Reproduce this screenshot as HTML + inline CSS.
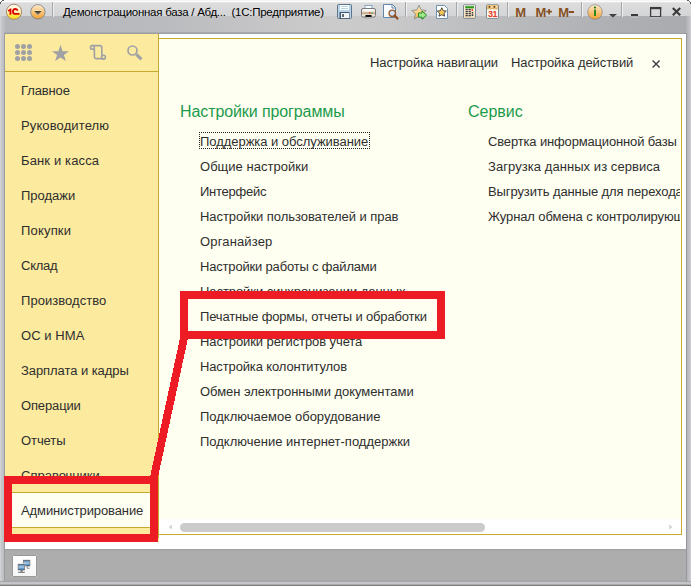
<!DOCTYPE html>
<html><head><meta charset="utf-8">
<style>
*{margin:0;padding:0;box-sizing:border-box}
html,body{width:691px;height:586px;overflow:hidden;background:#b0b2b6}
body{position:relative;font-family:"Liberation Sans",sans-serif;}
.a{position:absolute}
.t{position:absolute;white-space:nowrap;line-height:13px;font-size:13px;color:#2e2e2e;transform:scaleY(1.04);transform-origin:0 11px}
#tb-up{left:0;top:0;width:691px;height:16px;background:linear-gradient(#f2f2f3 0px,#fbfbfb 1.5px,#e6e6e7 2.5px,#dcdcdd 3.5px,#d4d5d7 16px)}
#tb-lo{left:0;top:16px;width:691px;height:18px;background:linear-gradient(90deg,#b3b5b8 0px,#b8b9bc 100px,#babbbe 160px,#c8c8c9 290px,#cbcbcb 340px,#c9c9ca 390px,#c0c1c3 450px,#aeafb2 620px,#a9abae 691px)}
#tb-sh{left:4px;top:32px;width:683px;height:2px;background:linear-gradient(#b0b1b4,#96979a)}
#lframe{left:0;top:16px;width:5px;height:570px;background:linear-gradient(90deg,#d8d9db 0px,#c9cacd 1px,#bfc1c4 3px,#b9bbbe 5px);border-top-right-radius:0}
#ldark{left:4px;top:33px;width:1px;height:549px;background:#9a9c9f}
#rdark{left:686px;top:33px;width:1px;height:549px;background:#96989b}
#rframe{left:686px;top:16px;width:5px;height:570px;background:linear-gradient(90deg,#aeb0b3 0px,#b9babd 2px,#c4c5c8 4px,#d0d1d3 5px);border-top-left-radius:3px}
#bframe{left:0;top:581px;width:691px;height:5px;background:linear-gradient(#8e9093 0px,#c0c1c4 1px,#c8c9cb 3px,#8a8b8e 4px,#6f7073 5px)}
#side{left:5px;top:34px;width:154px;height:508px;background:#fcea9e}
#sideline{left:5px;top:71px;width:153px;height:1px;background:#c7a92c}
#sidev{left:158px;top:34px;width:1px;height:504px;background:#c7a92c}
#white{left:159px;top:34px;width:527px;height:515px;background:#fff}
#main{left:159px;top:39px;width:522px;height:480px;background:#fffff1}
#mtop{left:159px;top:38px;width:523px;height:1px;background:#c7a92c}
#mright{left:681px;top:38px;width:1px;height:497px;background:#c7a92c}
#mbot{left:159px;top:534px;width:523px;height:1px;background:#c7a92c}
#swhite{left:5px;top:542px;width:154px;height:7px;background:#fff}
#status{left:5px;top:549px;width:681px;height:32px;background:linear-gradient(#9a9a9b 0px,#a8a8a8 1px,#adadad 3px,#adadad 31px,#a0a0a1 32px)}
#sel{left:5px;top:492px;width:153px;height:36px;background:#fffff1;border-top:1px solid #c7a92c;border-bottom:1px solid #c7a92c}
.side{left:21px}
.item{left:200px}
.grp{font-size:16px;line-height:16px;color:#1c9a4c;transform:none}
.red{position:absolute;background:#ed1c24}
.sep{position:absolute;top:2px;width:2px;height:15px;background:linear-gradient(90deg,#a6a7a9 0,#a6a7a9 1px,#ececec 1px)}
</style></head><body>
<div class="a" id="tb-up"></div>
<div class="a" id="tb-lo"></div>
<div class="a" id="tb-sh"></div>
<div class="a" id="lframe"></div>
<div class="a" id="rframe"></div>
<div class="a" id="bframe"></div><div class="a" id="ldark"></div><div class="a" id="rdark"></div>
<div class="a" id="white"></div>
<div class="a" id="side"></div>
<div class="a" id="swhite"></div>
<div class="a" id="sideline"></div>
<div class="a" id="sidev"></div>
<div class="a" id="main"></div>
<div class="a" id="mtop"></div>
<div class="a" id="mright"></div>
<div class="a" id="mbot"></div>
<div class="a" id="status"></div>
<div class="a" id="sel"></div>

<!-- title bar icons -->
<svg class="a" style="left:0;top:0" width="691" height="34">
  <defs>
    <linearGradient id="g1c" x1="0" y1="0" x2="0" y2="1"><stop offset="0" stop-color="#fffdf2"/><stop offset="0.5" stop-color="#fff4c0"/><stop offset="0.68" stop-color="#ffec50"/><stop offset="1" stop-color="#f8de10"/></linearGradient>
    <linearGradient id="gor" x1="0" y1="0" x2="0" y2="1"><stop offset="0" stop-color="#fdeccc"/><stop offset="0.5" stop-color="#f9c47c"/><stop offset="1" stop-color="#f3a030"/></linearGradient>
    <linearGradient id="gtri" x1="0" y1="0" x2="0" y2="1"><stop offset="0" stop-color="#3c3424"/><stop offset="1" stop-color="#9a8a6a"/></linearGradient>
    <linearGradient id="gstar" x1="0" y1="0" x2="0" y2="1"><stop offset="0" stop-color="#fff0c0"/><stop offset="1" stop-color="#f8b048"/></linearGradient>
    <linearGradient id="gbeige" x1="0" y1="0" x2="0" y2="1"><stop offset="0" stop-color="#fff6e8"/><stop offset="1" stop-color="#f6dcb4"/></linearGradient>
    <linearGradient id="gprn" x1="0" y1="0" x2="0" y2="1"><stop offset="0" stop-color="#faf6f2"/><stop offset="0.4" stop-color="#eadfd2"/><stop offset="0.55" stop-color="#b8987a"/><stop offset="0.7" stop-color="#e8dccd"/><stop offset="1" stop-color="#f4eee8"/></linearGradient>
  </defs>
  <!-- top-left corner -->
  <g shape-rendering="crispEdges"><rect x="0" y="0" width="2" height="1" fill="#fff"/><rect x="0" y="1" width="1" height="1" fill="#fff"/><rect x="2" y="0" width="2" height="1" fill="#5a5a5a"/><rect x="1" y="1" width="1" height="1" fill="#6a6a6a"/><rect x="0" y="2" width="1" height="2" fill="#5a5a5a"/></g>
  <g shape-rendering="crispEdges"><rect x="689" y="0" width="2" height="1" fill="#fff"/><rect x="690" y="1" width="1" height="1" fill="#fff"/><rect x="687" y="0" width="2" height="1" fill="#5a5a5a"/><rect x="689" y="1" width="1" height="1" fill="#6a6a6a"/><rect x="690" y="2" width="1" height="2" fill="#5a5a5a"/></g>
  <!-- 1C logo -->
  <circle cx="14" cy="11.8" r="7.6" fill="url(#g1c)" stroke="#a88470" stroke-width="1"/>
  <path d="M7.8 10.2 L10.3 8.6 L11.4 8.6 L11.4 14.7 L9.5 14.7 L9.5 11.1 L8.3 11.7 Z" fill="#e00000"/>
  <path d="M17.5 10.6 C17.3 8.7 13.8 8.3 13.1 10.6 C12.7 12.4 13.2 13.9 14.8 13.9 L19.4 13.9" fill="none" stroke="#e00000" stroke-width="1.9"/>
  <!-- dropdown circle -->
  <circle cx="37.9" cy="11.8" r="7.2" fill="url(#gor)" stroke="#6d7382" stroke-width="0.9" stroke-opacity="0.8"/>
  <path d="M33.6 10.6 L42.2 10.6 L37.9 15.6 Z" fill="#fff6e0" opacity="0.9"/>
  <path d="M34.2 11 L41.6 11 L37.9 15.2 Z" fill="url(#gtri)"/>
  <!-- separators -->
  <rect x="52" y="2" width="1" height="15" fill="#a6a7a9"/><rect x="53" y="2" width="1" height="15" fill="#eeeeee"/>
  <!-- floppy -->
  <rect x="337.5" y="4.5" width="14" height="14" rx="1" fill="#b9d3ea" stroke="#5e7386"/>
  <rect x="340" y="5" width="9" height="5" fill="#fdfeff"/>
  <rect x="341" y="6.2" width="7" height="0.8" fill="#a8cfe0"/><rect x="341" y="8" width="7" height="0.8" fill="#a8cfe0"/>
  <rect x="339.5" y="12" width="10" height="6.5" fill="#46596a"/>
  <rect x="341" y="13" width="8" height="5" fill="#f2f4f6"/>
  <rect x="342.2" y="14" width="1.6" height="3" fill="#3a4a58"/>
  <!-- printer -->
  <rect x="365" y="5.5" width="7" height="6" fill="#fbfcfe" stroke="#86a4c2" stroke-width="1"/>
  <rect x="361.5" y="8.5" width="14" height="8.5" rx="1.5" fill="url(#gprn)" stroke="#7a7a7a" stroke-width="1"/>
  <rect x="364.5" y="9" width="8" height="2" fill="#fbfcfe"/>
  <rect x="365.5" y="15" width="6" height="2.2" fill="#0a0a0a"/>
  <rect x="365.6" y="17.2" width="5.8" height="1.3" fill="#fafafa" stroke="#888" stroke-width="0.5"/>
  <circle cx="369.6" cy="13.1" r="0.75" fill="#e82a1a"/><circle cx="372" cy="13.1" r="0.75" fill="#2aaa2a"/>
  <!-- preview -->
  <path d="M383.5 4.5 L392.5 4.5 L395.5 7.5 L395.5 17.5 L383.5 17.5 Z" fill="#fbfdff" stroke="#6485a6"/>
  <path d="M392 4.5 L392 8 L395.5 8" fill="none" stroke="#6485a6" stroke-width="1"/>
  <circle cx="392.3" cy="13.3" r="3.2" fill="#cfe2fa" stroke="#9a5a2a" stroke-width="1.4"/>
  <path d="M394.6 15.6 L397.4 18.6" stroke="#8a4a20" stroke-width="2.2" stroke-linecap="round"/>
  <rect x="405" y="2" width="1" height="15" fill="#a6a7a9"/><rect x="406" y="2" width="1" height="15" fill="#eeeeee"/>
  <!-- star with arrow -->
  <path d="M419 5.3 L421.2 9.9 L426.2 10.5 L422.5 13.8 L423.6 18.8 L419 16.3 L414.4 18.8 L415.5 13.8 L411.8 10.5 L416.8 9.9 Z" fill="url(#gstar)" stroke="#8a8a8a" stroke-width="0.9"/>
  <path d="M418.5 13 L422 13 L422 11 L426.6 15.2 L422 19.2 L422 17.2 L418.5 17.2 Z" fill="#9ee88a" stroke="#1f8a1f" stroke-width="1"/>
  <!-- page with star -->
  <path d="M436.5 5.5 L444.5 5.5 L447.5 8.5 L447.5 18.5 L436.5 18.5 Z" fill="#fdfeff" stroke="#7092ac"/>
  <path d="M441.8 7.8 L443.2 10.7 L446.3 11.1 L444 13.2 L444.6 16.2 L441.8 14.7 L439 16.2 L439.6 13.2 L437.3 11.1 L440.4 10.7 Z" fill="#f6c85a" stroke="#3a3a3a" stroke-width="0.9"/>
  <rect x="456" y="2" width="1" height="15" fill="#a6a7a9"/><rect x="457" y="2" width="1" height="15" fill="#eeeeee"/>
  <!-- calculator -->
  <rect x="463.5" y="4.8" width="12" height="13.6" rx="0.8" fill="url(#gbeige)" stroke="#7a8a96"/>
  <rect x="465.2" y="6.2" width="8.8" height="2.2" fill="#2a9a1a"/>
  <g fill="#3a3a3a"><rect x="465.6" y="9.0" width="2.2" height="1.3"/><rect x="468.6" y="9.0" width="2.2" height="1.3"/><rect x="465.6" y="11.0" width="2.2" height="1.3"/><rect x="468.6" y="11.0" width="2.2" height="1.3"/><rect x="465.6" y="13.0" width="2.2" height="1.3"/><rect x="468.6" y="13.0" width="2.2" height="1.3"/><rect x="465.6" y="15.0" width="2.2" height="1.3"/><rect x="468.6" y="15.0" width="2.2" height="1.3"/><rect x="471.7" y="12" width="1.5" height="1.5"/><rect x="471.7" y="14.2" width="1.5" height="1.8"/></g>
  <rect x="471.6" y="9.2" width="1.4" height="1.8" fill="#e83020"/>
  <!-- calendar -->
  <rect x="486.5" y="4.8" width="12" height="13.6" rx="0.8" fill="#fdf6ea" stroke="#7a8a96"/>
  <rect x="487" y="5.2" width="11" height="3.6" fill="#eebc6c"/>
  <rect x="487" y="8.6" width="11" height="0.6" fill="#c89a50"/>
  <circle cx="489.4" cy="6.9" r="0.8" fill="#3a2a1a"/><circle cx="491.9" cy="6.9" r="0.7" fill="#fff8e8"/><circle cx="494.4" cy="6.9" r="0.8" fill="#3a2a1a"/><circle cx="496.6" cy="6.9" r="0.7" fill="#fff8e8"/>
  <text x="492.6" y="17" font-family="Liberation Sans" font-size="9" font-weight="bold" fill="#e23a26" text-anchor="middle" letter-spacing="-0.3">31</text>
  <rect x="507" y="2" width="1" height="15" fill="#a6a7a9"/><rect x="508" y="2" width="1" height="15" fill="#eeeeee"/>
  <!-- M buttons -->
  <g font-family="Liberation Sans" font-weight="bold" font-size="13" fill="#87501f">
    <text x="515.2" y="16.8">M</text>
    <text x="535.4" y="16.8">M</text>
    <text x="558.2" y="16.8">M</text>
  </g>
  <path d="M546.3 11.7 L551.9 11.7 M549.1 9 L549.1 14.4" stroke="#87501f" stroke-width="1.7"/>
  <rect x="568.8" y="11" width="5.2" height="2" fill="#87501f"/>
  <rect x="581" y="2" width="1" height="15" fill="#a6a7a9"/><rect x="582" y="2" width="1" height="15" fill="#eeeeee"/>
  <!-- info -->
  <circle cx="595" cy="12" r="7.3" fill="url(#gor)" stroke="#70707a" stroke-width="0.8" stroke-opacity="0.7"/>
  <circle cx="595" cy="7.6" r="1.1" fill="#1f7a1a"/>
  <rect x="594" y="9.6" width="2" height="6.4" fill="#2a8a20"/>
  <path d="M608.8 14 L617 14 L612.9 17.6 Z" fill="#404040"/>
  <rect x="621" y="2" width="1" height="15" fill="#a6a7a9"/><rect x="622" y="2" width="1" height="15" fill="#eeeeee"/>
  <!-- window controls -->
  <rect x="631" y="14" width="7" height="2.4" fill="#3a3a3a"/>
  <rect x="631" y="16.4" width="7" height="1" fill="#f4f4f4" opacity="0.7"/>
  <rect x="650.6" y="7.6" width="10" height="9.2" fill="none" stroke="#3a3a3a" stroke-width="1.3"/>
  <rect x="650" y="7" width="11.2" height="2.2" fill="#3a3a3a"/>
  <rect x="650" y="17.2" width="11.2" height="1" fill="#f4f4f4" opacity="0.7"/>
  <path d="M672.8 8 L680.2 15.2 M680.2 8 L672.8 15.2" stroke="#3a3a3a" stroke-width="2.1"/>
</svg>

<!-- title text -->
<div class="t" style="left:63px;top:6.6px;font-size:11.5px;line-height:11px;color:#000;transform:none;letter-spacing:-0.26px">Демонстрационная база / Абд...&nbsp; (1С:Предприятие)</div>

<!-- sidebar icons -->
<svg class="a" style="left:0;top:34px" width="158" height="37">
  <g fill="#a0a1a5">
    <circle cx="17.5" cy="12.5" r="2.5"/><circle cx="23.5" cy="12.5" r="2.5"/><circle cx="29.5" cy="12.5" r="2.5"/>
    <circle cx="17.5" cy="18.5" r="2.5"/><circle cx="23.5" cy="18.5" r="2.5"/><circle cx="29.5" cy="18.5" r="2.5"/>
    <circle cx="17.5" cy="24.5" r="2.5"/><circle cx="23.5" cy="24.5" r="2.5"/><circle cx="29.5" cy="24.5" r="2.5"/>
    <path d="M60.5 10.8 L62.6 17.2 L69 17.2 L63.9 21.1 L65.9 27 L60.5 23.4 L55.1 27 L57.1 21.1 L52 17.2 L58.4 17.2 Z"/>
  </g>
  <g fill="none" stroke="#a0a1a5" stroke-width="1.6">
    <circle cx="92.4" cy="13.4" r="1.9"/>
    <path d="M92.4 11.6 L100 11.6 Q101.8 11.6 101.8 13.4 L101.8 21.6"/>
    <path d="M94.4 14.8 L94.4 22.6 Q94.4 24.6 96.4 24.6 L103.4 24.6"/>
    <circle cx="103.5" cy="23.2" r="1.9"/>
    <circle cx="132.5" cy="16.5" r="4.5" stroke-width="1.7"/>
  </g>
  <path d="M136.4 20.4 L141.4 25.4" stroke="#a0a1a5" stroke-width="3"/>
</svg>

<!-- sidebar items -->
<div class="t side" style="top:84px;letter-spacing:-0.135px">Главное</div>
<div class="t side" style="top:119px;letter-spacing:0.115px">Руководителю</div>
<div class="t side" style="top:154px;letter-spacing:0.139px">Банк и касса</div>
<div class="t side" style="top:189px;letter-spacing:0.000px">Продажи</div>
<div class="t side" style="top:224px;letter-spacing:0.180px">Покупки</div>
<div class="t side" style="top:259px;letter-spacing:-0.248px">Склад</div>
<div class="t side" style="top:294px;letter-spacing:0.041px">Производство</div>
<div class="t side" style="top:329px;letter-spacing:0.077px">ОС и НМА</div>
<div class="t side" style="top:364px;letter-spacing:-0.066px">Зарплата и кадры</div>
<div class="t side" style="top:399px;letter-spacing:-0.141px">Операции</div>
<div class="t side" style="top:434px;letter-spacing:-0.072px">Отчеты</div>
<div class="t side" style="top:469px">Справочники</div>
<div class="t side" style="top:504px;letter-spacing:-0.105px">Администрирование</div>

<!-- top links -->
<div class="t" style="left:370px;top:56px;letter-spacing:-0.095px">Настройка навигации</div>
<div class="t" style="left:511px;top:56px;letter-spacing:-0.071px">Настройка действий</div>
<svg class="a" style="left:650px;top:58px" width="12" height="12"><path d="M2.6 2.6 L9.6 9.4 M9.6 2.6 L2.6 9.4" stroke="#404040" stroke-width="1.4"/></svg>

<!-- groups -->
<div class="t grp" style="left:180px;top:104px;letter-spacing:-0.1px">Настройки программы</div>
<div class="t grp" style="left:468px;top:104px">Сервис</div>

<div class="a" style="left:199px;top:132px;width:171px;height:17px;border:1px dotted #222"></div>
<div class="t item" style="top:135px;letter-spacing:-0.039px">Поддержка и обслуживание</div>
<div class="t item" style="top:160px;letter-spacing:0.026px">Общие настройки</div>
<div class="t item" style="top:185px;letter-spacing:-0.255px">Интерфейс</div>
<div class="t item" style="top:210px;letter-spacing:-0.053px">Настройки пользователей и прав</div>
<div class="t item" style="top:235px;letter-spacing:0.150px">Органайзер</div>
<div class="t item" style="top:260px;letter-spacing:-0.182px">Настройки работы с файлами</div>
<div class="t item" style="top:285px;letter-spacing:-0.072px">Настройки синхронизации данных</div>
<div class="t item" style="top:310px;letter-spacing:-0.165px">Печатные формы, отчеты и обработки</div>
<div class="t item" style="top:335px;letter-spacing:-0.085px">Настройки регистров учета</div>
<div class="t item" style="top:360px;letter-spacing:-0.134px">Настройка колонтитулов</div>
<div class="t item" style="top:385px;letter-spacing:-0.038px">Обмен электронными документами</div>
<div class="t item" style="top:410px;letter-spacing:-0.002px">Подключаемое оборудование</div>
<div class="t item" style="top:435px;letter-spacing:-0.007px">Подключение интернет-поддержки</div>

<div class="a" style="left:486px;top:120px;width:194px;height:120px;overflow:hidden">
<div class="t" style="left:2px;top:15px;letter-spacing:-0.152px">Свертка информационной базы</div>
<div class="t" style="left:2px;top:40px;letter-spacing:0.062px">Загрузка данных из сервиса</div>
<div class="t" style="left:2px;top:65px;letter-spacing:-0.1px">Выгрузить данные для перехода в сервис</div>
<div class="t" style="left:2px;top:90px;letter-spacing:-0.1px">Журнал обмена с контролирующими органами</div>
</div>

<!-- scrollbar -->
<div class="a" style="left:159px;top:519px;width:522px;height:15px;background:#fff"></div>
<div class="a" style="left:180px;top:523px;width:305px;height:9px;border-radius:4.5px;background:#cbcbcb"></div>
<svg class="a" style="left:165px;top:522px" width="10" height="10"><path d="M3.6 5 L7 2.4 L7 7.6 Z" fill="#d4d4d4"/></svg>
<svg class="a" style="left:666px;top:522px" width="10" height="10"><path d="M6.6 5 L3.2 2.4 L3.2 7.6 Z" fill="#d4d4d4"/></svg>

<!-- status bar button -->
<div class="a" style="left:12px;top:555px;width:25px;height:22px;background:linear-gradient(#ffffff,#f6f6f6);border:1px solid #999"></div><svg class="a" style="left:12px;top:555px" width="25" height="22" shape-rendering="crispEdges"><rect x="0" y="0" width="1" height="1" fill="#c8c8c8"/><rect x="24" y="0" width="1" height="1" fill="#c8c8c8"/><rect x="0" y="21" width="1" height="1" fill="#c8c8c8"/><rect x="24" y="21" width="1" height="1" fill="#c8c8c8"/></svg>
<svg class="a" style="left:12px;top:555px" width="25" height="22">
  <defs><linearGradient id="gmon" x1="0" y1="0" x2="0" y2="1"><stop offset="0" stop-color="#1a3a5a"/><stop offset="0.2" stop-color="#6a9cc8"/><stop offset="0.5" stop-color="#a8c8e4"/><stop offset="1" stop-color="#1e64a8"/></linearGradient></defs>
  <rect x="11.3" y="5.2" width="6.6" height="5.8" fill="url(#gmon)" stroke="#707070" stroke-width="0.7"/>
  <path d="M15.2 11.2 L15.2 13.3 L17.6 13.3" stroke="#808080" stroke-width="0.9" fill="none"/>
  <rect x="5" y="8.4" width="8.2" height="7.6" fill="#fff"/>
  <rect x="6.1" y="9.2" width="6.6" height="5.8" fill="url(#gmon)" stroke="#707070" stroke-width="0.7"/>
  <rect x="8.6" y="15.2" width="2" height="1.6" fill="#666"/>
  <rect x="6.2" y="16.8" width="6.6" height="1" fill="#6a6a6a"/>
</svg>

<!-- red annotations -->
<div class="red" style="left:180px;top:291px;width:265px;height:8px"></div>
<div class="red" style="left:180px;top:331px;width:265px;height:8px"></div>
<div class="red" style="left:180px;top:291px;width:8px;height:48px"></div>
<div class="red" style="left:437px;top:291px;width:8px;height:48px"></div>

<div class="red" style="left:4px;top:476px;width:154px;height:8px"></div>
<div class="red" style="left:4px;top:534px;width:154px;height:8px"></div>
<div class="red" style="left:4px;top:476px;width:8px;height:66px"></div>
<div class="red" style="left:150px;top:476px;width:8px;height:66px"></div>
<svg class="a" style="left:0;top:0" width="691" height="586"><path d="M180 338 L188 338 L158 477 L150 477 Z" fill="#ed1c24" shape-rendering="crispEdges"/></svg>
</body></html>
